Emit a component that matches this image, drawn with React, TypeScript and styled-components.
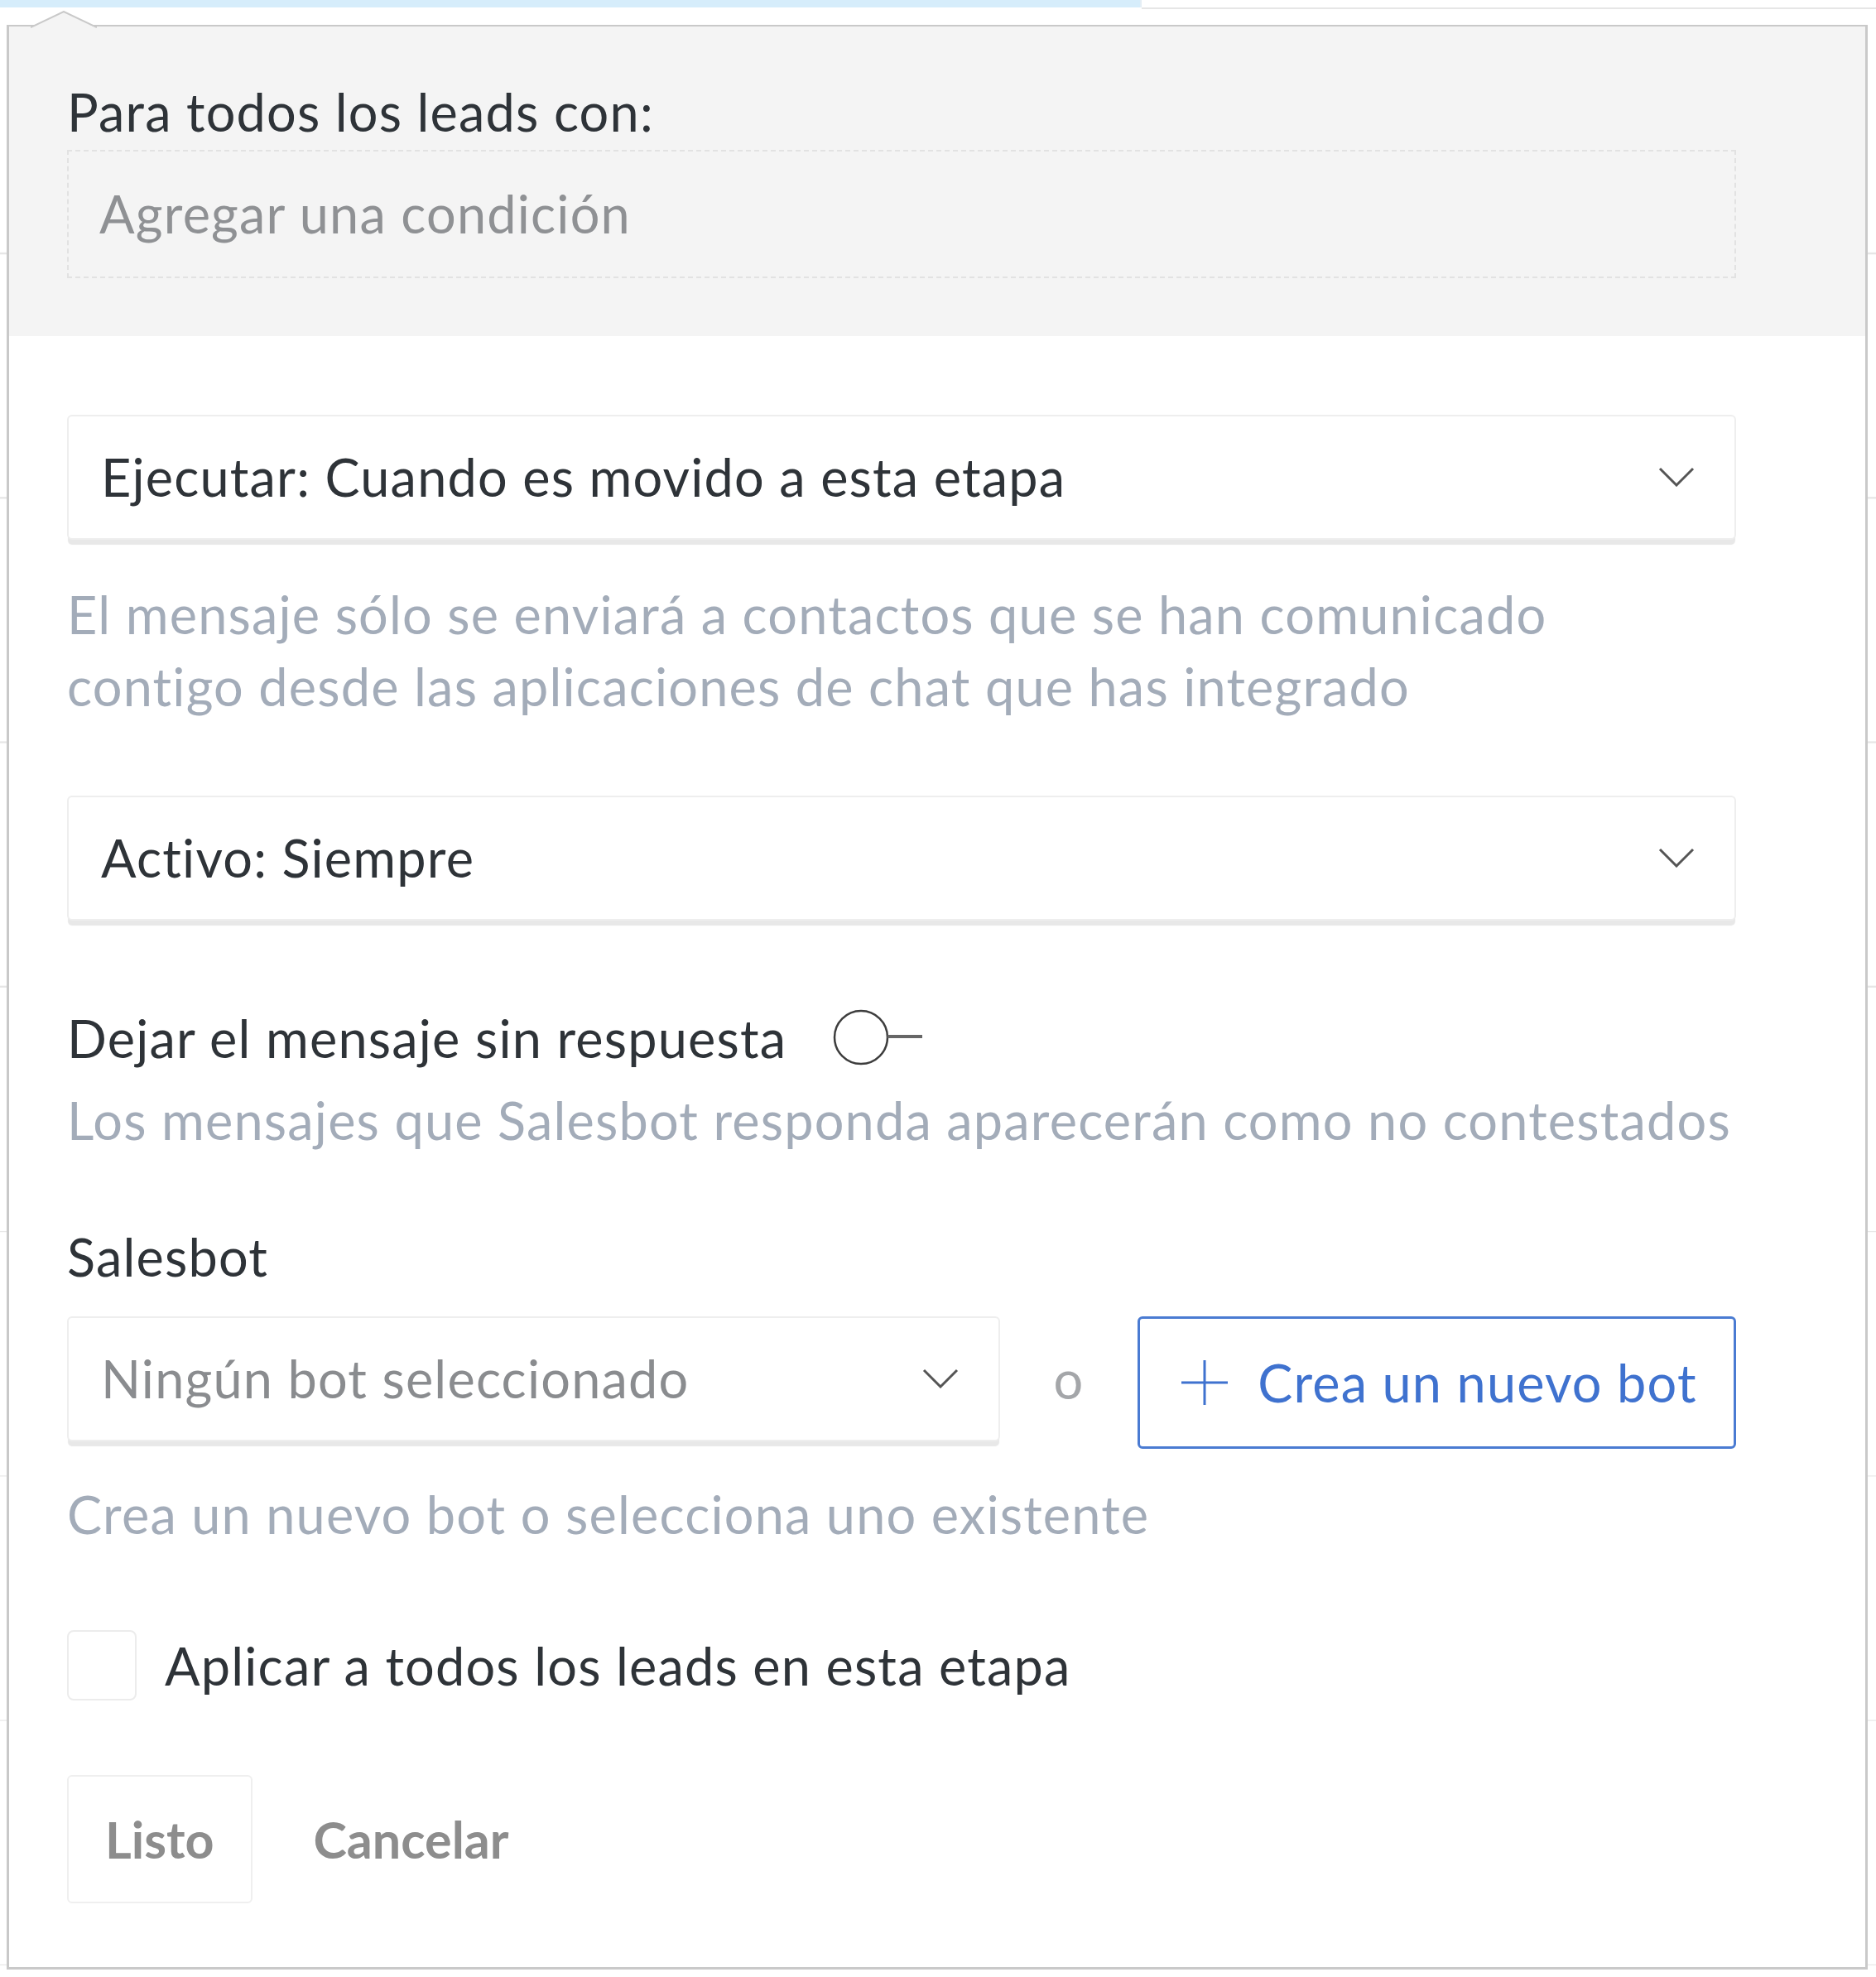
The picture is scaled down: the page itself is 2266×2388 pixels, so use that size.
import React, { useState } from 'react'
import styled, { createGlobalStyle } from 'styled-components'

const GlobalStyle = createGlobalStyle`
  html, body {
    margin: 0;
    padding: 0;
    background: #ffffff;
  }
  body {
    font-family: 'Lato', 'Open Sans', sans-serif;
    letter-spacing: 1.2px;
    -webkit-font-smoothing: antialiased;
  }
`

// page behind the popup: a selected column tab and faint table rows
const Page = styled.div`
  width: 2266px;
  min-height: 2388px;
  background-image: repeating-linear-gradient(
    to bottom,
    transparent 0px,
    transparent 293.3px,
    #e6e6e6 293.3px,
    #e6e6e6 295.3px
  );
  background-position: 0 12px;
`

const TabStrip = styled.div`
  display: flex;
  height: 11px;
  background: #ffffff;
`

const ActiveTab = styled.div`
  width: 1377px;
  height: 9px;
  background: #d6edfb;
  border-right: 2px solid #e4eef5;
`

const TabRest = styled.div`
  flex: 1;
  height: 9px;
  border-bottom: 2px solid #e6e6e6;
`

const Popup = styled.div`
  position: relative;
  margin: 19px 0 0 8px;
  width: 2248px;
  box-sizing: border-box;
  border: 3px solid #c9c9c9;
  border-top-width: 2px;
  background: #ffffff;
`

const Arrow = styled.svg`
  position: absolute;
  left: 26px;
  top: -19px;
`

const Header = styled.div`
  background: #f4f4f4;
  padding: 65px 156px 70px 70px;
`

const Body = styled.div`
  padding: 95px 156px 77px 70px;
  display: flex;
  flex-direction: column;
`

const Title = styled.div`
  font-size: 63px;
  line-height: 75.6px;
  color: #2e3338;
`

const ConditionBox = styled.div`
  margin-top: 8px;
  height: 155px;
  box-sizing: border-box;
  border: 2px dashed #e2e2e2;
  display: flex;
  align-items: center;
  padding-left: 37px;
  font-size: 63px;
  line-height: 75.6px;
  color: #8f9194;
`

const Select = styled.div<{ $width?: number; $muted?: boolean; $top?: number }>`
  margin-top: ${(p) => p.$top ?? 0}px;
  width: ${(p) => (p.$width ? `${p.$width}px` : '100%')};
  height: 151px;
  box-sizing: border-box;
  border: 2px solid #eeeeee;
  border-radius: 6px;
  box-shadow: 0 7px 1px -1px #e8e8e8;
  background: #ffffff;
  display: flex;
  align-items: center;
  justify-content: space-between;
  padding: 0 48px 0 39px;
  font-size: 63px;
  line-height: 75.6px;
  color: ${(p) => (p.$muted ? '#8a8c8f' : '#2e3338')};
`

const Hint = styled.div<{ $top: number }>`
  margin-top: ${(p) => p.$top}px;
  font-size: 63px;
  line-height: 87px;
  color: #a3acb9;
`

const Label = styled.div<{ $top: number }>`
  margin-top: ${(p) => p.$top}px;
  font-size: 63px;
  line-height: 87px;
  color: #2e3338;
`

const ToggleRow = styled.div`
  margin-top: 98px;
  display: flex;
  align-items: center;
  gap: 56px;
  font-size: 63px;
  line-height: 87px;
  color: #2e3338;
`

const ToggleButton = styled.button`
  display: flex;
  align-items: center;
  padding: 0;
  border: 0;
  background: none;
  cursor: pointer;
`

const BotRow = styled.div`
  margin-top: 29px;
  display: flex;
  align-items: flex-start;
`

const Or = styled.div`
  width: 166px;
  height: 151px;
  display: flex;
  align-items: center;
  justify-content: center;
  font-size: 63px;
  color: #a4a6a9;
`

const NewBotButton = styled.button`
  flex: 1;
  height: 160px;
  box-sizing: border-box;
  border: 3px solid #4a7bd2;
  border-radius: 6px;
  background: #ffffff;
  display: flex;
  align-items: center;
  justify-content: center;
  gap: 36px;
  padding: 0 0 0 6px;
  font-family: 'Lato', 'Open Sans', sans-serif;
  letter-spacing: 1.2px;
  font-size: 63px;
  color: #3f72cf;
  cursor: pointer;
`

const CheckRow = styled.label`
  margin-top: 96px;
  display: flex;
  align-items: center;
  gap: 34px;
  font-size: 63px;
  line-height: 87px;
  color: #2e3338;
  cursor: pointer;
`

const CheckBox = styled.span<{ $on: boolean }>`
  width: 84px;
  height: 85px;
  box-sizing: border-box;
  border: 2px solid #ececec;
  border-radius: 8px;
  background: ${(p) => (p.$on ? '#4a7bd2' : '#ffffff')};
`

const Actions = styled.div`
  margin-top: 89px;
  display: flex;
  align-items: center;
  gap: 72px;
`

const ActionButton = styled.button<{ $framed?: boolean }>`
  height: 155px;
  box-sizing: border-box;
  padding: 0 ${(p) => (p.$framed ? 44 : 0)}px;
  border: 2px solid ${(p) => (p.$framed ? '#efefef' : 'transparent')};
  border-radius: 6px;
  background: #ffffff;
  font-family: 'Lato', 'Open Sans', sans-serif;
  font-weight: 700;
  font-size: 61px;
  letter-spacing: 0;
  color: #8d8d8d;
  cursor: pointer;
`

const Chevron = () => (
  <svg width="44" height="24" viewBox="0 0 44 24">
    <polyline points="2,2 22,22 42,2" fill="none" stroke="#555" strokeWidth="3" />
  </svg>
)

function App() {
  const [unanswered, setUnanswered] = useState(false)
  const [applyAll, setApplyAll] = useState(false)

  return (
    <>
      <GlobalStyle />
      <Page>
        <TabStrip>
          <ActiveTab />
          <TabRest />
        </TabStrip>

        <Popup>
          <Arrow width="80" height="21" viewBox="0 0 80 21">
            <polygon points="0,21 40,1 80,21" fill="#f4f4f4" />
            <polyline points="0,20 40,1 80,20" fill="none" stroke="#c9c9c9" strokeWidth="2" />
          </Arrow>

          <Header>
            <Title>Para todos los leads con:</Title>
            <ConditionBox>Agregar una condición</ConditionBox>
          </Header>

          <Body>
            <Select>
              <span>Ejecutar: Cuando es movido a esta etapa</span>
              <Chevron />
            </Select>
            <Hint $top={46}>
              El mensaje sólo se enviará a contactos que se han comunicado<br />
              contigo desde las aplicaciones de chat que has integrado
            </Hint>

            <Select $top={89}>
              <span>Activo: Siempre</span>
              <Chevron />
            </Select>

            <ToggleRow>
              <span>Dejar el mensaje sin respuesta</span>
              <ToggleButton onClick={() => setUnanswered(!unanswered)}>
                <svg width="110" height="70" viewBox="0 0 110 70">
                  <circle cx="34" cy="35" r="32" fill="#fff" stroke="#3d3d3d" strokeWidth="2.5" />
                  <line x1="66" y1="34" x2="108" y2="34" stroke="#666" strokeWidth="4" />
                </svg>
              </ToggleButton>
            </ToggleRow>
            <Hint $top={12}>Los mensajes que Salesbot responda aparecerán como no contestados</Hint>

            <Label $top={78}>Salesbot</Label>
            <BotRow>
              <Select $width={1127} $muted>
                <span>Ningún bot seleccionado</span>
                <Chevron />
              </Select>
              <Or>o</Or>
              <NewBotButton>
                <svg width="56" height="54" viewBox="0 0 56 54">
                  <line x1="0" y1="27" x2="56" y2="27" stroke="#3f72cf" strokeWidth="3" />
                  <line x1="28" y1="0" x2="28" y2="54" stroke="#3f72cf" strokeWidth="3" />
                </svg>
                <span>Crea un nuevo bot</span>
              </NewBotButton>
            </BotRow>
            <Hint $top={35}>Crea un nuevo bot o selecciona uno existente</Hint>

            <CheckRow onClick={() => setApplyAll(!applyAll)}>
              <CheckBox $on={applyAll} />
              <span>Aplicar a todos los leads en esta etapa</span>
            </CheckRow>

            <Actions>
              <ActionButton $framed>Listo</ActionButton>
              <ActionButton>Cancelar</ActionButton>
            </Actions>
          </Body>
        </Popup>
      </Page>
    </>
  )
}

export default App
